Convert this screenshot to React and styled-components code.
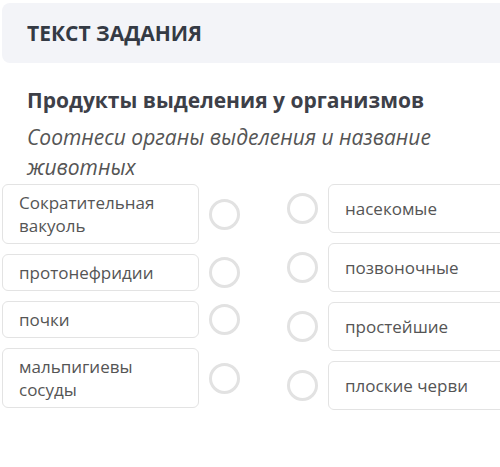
import styled, { createGlobalStyle } from "styled-components";

const GlobalStyle = createGlobalStyle`
  html, body {
    margin: 0;
    padding: 0;
    background: #ffffff;
    overflow: hidden;
  }
  body {
    font-family: "Open Sans", "Noto Sans", sans-serif;
  }
`;

const leftItems = [
  "Сократительная вакуоль",
  "протонефридии",
  "почки",
  "мальпигиевы сосуды",
];

const rightItems = ["насекомые", "позвоночные", "простейшие", "плоские черви"];

export default function App() {
  return (
    <Page>
      <GlobalStyle />
      <TaskHeader>ТЕКСТ ЗАДАНИЯ</TaskHeader>
      <Intro>
        <Title>Продукты выделения у организмов</Title>
        <Subtitle>Соотнеси органы выделения и название животных</Subtitle>
      </Intro>
      <Match>
        <Column>
          {leftItems.map((text) => (
            <Row key={text}>
              <LeftCard>{text}</LeftCard>
              <Dot />
            </Row>
          ))}
        </Column>
        <Column $right>
          {rightItems.map((text) => (
            <Row key={text}>
              <Dot />
              <RightCard>{text}</RightCard>
            </Row>
          ))}
        </Column>
      </Match>
    </Page>
  );
}

// styles
const Page = styled.div`
  width: 540px;
  padding: 3px 0 0 2px;
`;

const TaskHeader = styled.header`
  height: 60px;
  display: flex;
  align-items: center;
  padding-left: 25px;
  background: #f3f4f8;
  border-radius: 8px;
  font-weight: 700;
  font-size: 21px;
  color: #343a44;
`;

const Intro = styled.div`
  padding: 23px 0 0 25px;
`;

const Title = styled.h2`
  margin: 0;
  font-size: 21px;
  line-height: 28px;
  font-weight: 700;
  color: #3d4048;
`;

const Subtitle = styled.p`
  margin: 8px 0 0;
  width: 440px;
  font-size: 21px;
  line-height: 30px;
  font-style: italic;
  color: #555555;
`;

const Match = styled.div`
  display: flex;
  gap: 47px;
  margin-top: 2px;
`;

const Column = styled.div`
  display: flex;
  flex-direction: column;
  gap: 10px;
  flex: ${(props) => (props.$right ? "1" : "none")};
`;

const Row = styled.div`
  display: flex;
  align-items: center;
  gap: 10px;
`;

const Card = styled.div`
  border: 1px solid #e3e3e3;
  border-radius: 6px;
  background: #ffffff;
  font-size: 17px;
  line-height: 23px;
  color: #555555;
  box-sizing: border-box;
`;

const LeftCard = styled(Card)`
  width: 197px;
  padding: 6px 16px;
`;

const RightCard = styled(Card)`
  flex: 1;
  padding: 12px 16px;
`;

const Dot = styled.span`
  width: 31px;
  height: 31px;
  flex: none;
  border: 3px solid #e2e2e2;
  border-radius: 50%;
  box-sizing: border-box;
`;
